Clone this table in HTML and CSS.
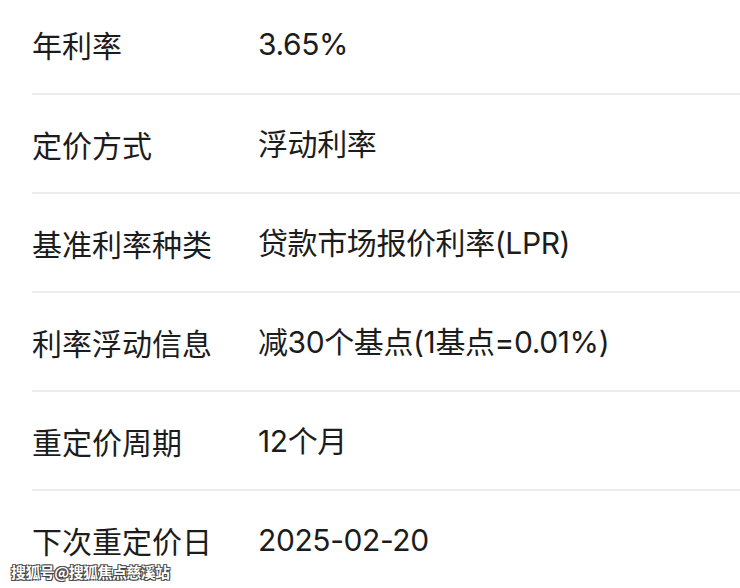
FILE: index.html
```html
<!DOCTYPE html>
<html lang="zh-CN">
<head>
<meta charset="utf-8">
<link rel="stylesheet" href="styles.css">
</head>
<body>
<div class="page">
  <div class="list">
    <div class="row first"><span class="label">年利率</span><span class="value">3.65%</span></div>
    <div class="row"><span class="label">定价方式</span><span class="value">浮动利率</span></div>
    <div class="row"><span class="label">基准利率种类</span><span class="value">贷款市场报价利率(LPR)</span></div>
    <div class="row"><span class="label">利率浮动信息</span><span class="value">减30个基点(1基点=0.01%)</span></div>
    <div class="row"><span class="label">重定价周期</span><span class="value">12个月</span></div>
    <div class="row last"><span class="label">下次重定价日</span><span class="value">2025-02-20</span></div>
  </div>
  <div class="watermark">搜狐号@搜狐焦点慈溪站</div>
</div>
</body>
</html>
```
FILE: styles.css
```css
html, body {
  margin: 0;
  padding: 0;
  background: #ffffff;
}
.page {
  position: relative;
  width: 740px;
  height: 588px;
  overflow: hidden;
  font-family: "Inter", "Noto Sans CJK SC", sans-serif;
  color: #1c1c1c;
}
.list {
  padding-left: 32px;
}
.row {
  display: grid;
  grid-template-columns: 226px 1fr;
  align-items: center;
  height: 97px;
  border-bottom: 2px solid #ececec;
  font-size: 30px;
  line-height: 40px;
}
.row.first {
  height: 95px;
  box-sizing: border-box;
  padding-bottom: 5px;
}
.row.last {
  border-bottom: none;
}
.label {
  font-family: "Noto Sans CJK SC", sans-serif;
  white-space: nowrap;
}
.value {
  white-space: nowrap;
  letter-spacing: -0.4px;
}
.watermark {
  position: absolute;
  left: 11px;
  top: 562px;
  font-family: "Noto Sans CJK SC", sans-serif;
  font-size: 15px;
  line-height: 20px;
  font-weight: 700;
  color: #ffffff;
  letter-spacing: -0.6px;
  text-shadow: 0 0 1px #333, 1px 1px 0 #444, -1px -1px 0 #555, 1px -1px 0 #555, -1px 1px 0 #555;
}
```
